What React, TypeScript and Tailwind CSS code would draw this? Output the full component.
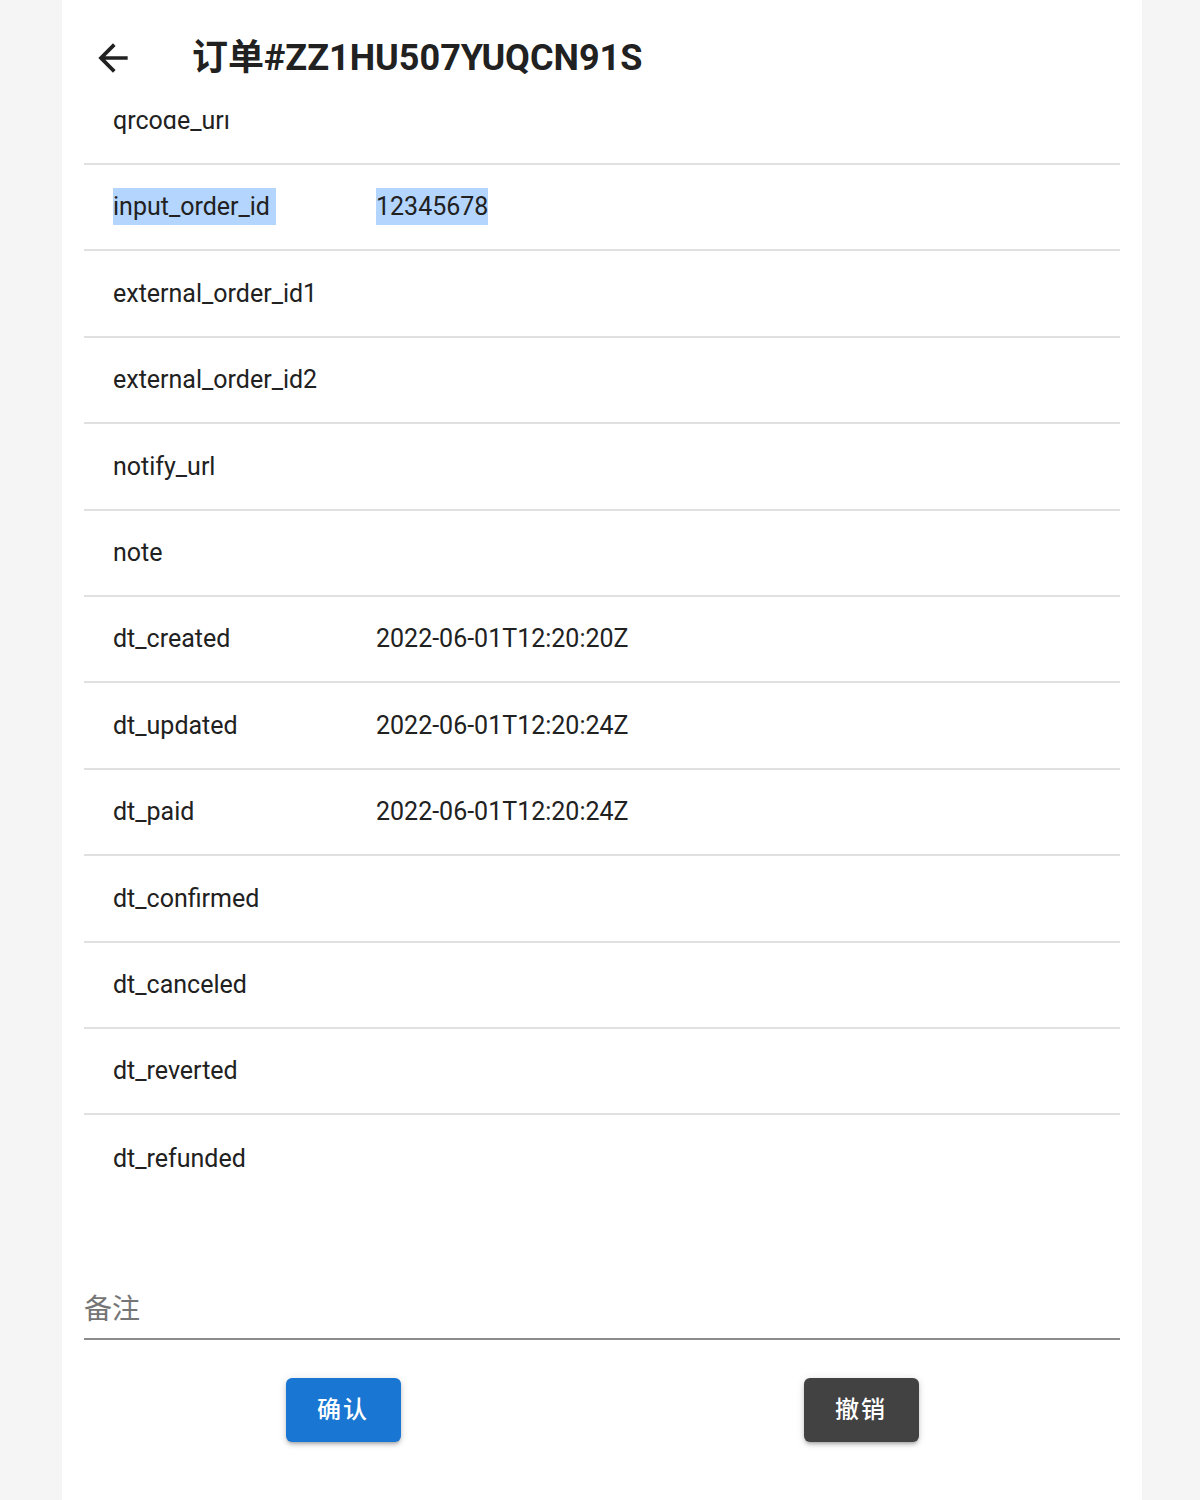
import React from "react";

const rows: [string, string, boolean?][] = [
  ["qrcode_url", ""],
  ["input_order_id", "12345678", true],
  ["external_order_id1", ""],
  ["external_order_id2", ""],
  ["notify_url", ""],
  ["note", ""],
  ["dt_created", "2022-06-01T12:20:20Z"],
  ["dt_updated", "2022-06-01T12:20:24Z"],
  ["dt_paid", "2022-06-01T12:20:24Z"],
  ["dt_confirmed", ""],
  ["dt_canceled", ""],
  ["dt_reverted", ""],
  ["dt_refunded", ""],
];

export default function App() {
  return (
    <div
      className="min-h-[1500px] w-[1200px] bg-[#f5f5f5] flex"
      style={{ fontFamily: "Roboto, 'Noto Sans CJK SC', sans-serif" }}
    >
      <div className="relative ml-[62px] w-[1080px] h-[1500px] bg-white overflow-hidden px-[22px]">
        <div className="absolute top-0 left-0 right-0 h-[115px] bg-white z-10 flex items-start pt-[36px]">
          <div className="w-[44px] h-[44px] ml-[29px] text-[#212121]">
            <svg viewBox="0 0 24 24" width="44" height="44" fill="currentColor">
              <path d="M20 11H7.83l5.59-5.59L12 4l-8 8 8 8 1.41-1.41L7.83 13H20v-2z" />
            </svg>
          </div>
          <div className="ml-[57px] mt-[4px] text-[36px] font-bold text-[#212121] leading-[36px]">
            订单#ZZ1HU507YUQCN91S
          </div>
        </div>
        <div className="pt-[78.6px]">
          {rows.map(([k, v, sel], i) => (
            <div
              key={k}
              className={
                "flex items-center h-[86.4px] text-[25px] text-[#212121] " +
                (i < rows.length - 1 ? "border-b-2 border-[#e0e0e0]" : "")
              }
            >
              <div className="w-[263px] pl-[29px]">
                <span className={sel ? "bg-[#b4d5fe] inline-block leading-[37px] pr-[6px]" : ""}>{k}</span>
              </div>
              <div className="pl-[29px]">
                <span className={sel ? "bg-[#b4d5fe] inline-block leading-[37px]" : ""}>{v}</span>
              </div>
            </div>
          ))}
        </div>
        <div className="mt-[91px] border-b-2 border-[#8c8c8c] pb-[11px]">
          <div className="text-[28px] text-[#757575] leading-[34px]">备注</div>
        </div>
        <div className="grid grid-cols-2 mt-[38px]">
          <div className="flex justify-center">
            <button className="w-[115px] h-[64px] rounded-[6px] bg-[#1976d2] text-white text-[24px] font-medium tracking-[2px] shadow-[0_3px_3px_-2px_rgba(0,0,0,0.2),0_3px_4px_0_rgba(0,0,0,0.14),0_1px_8px_0_rgba(0,0,0,0.12)]">
              确认
            </button>
          </div>
          <div className="flex justify-center">
            <button className="w-[115px] h-[64px] rounded-[6px] bg-[#424242] text-white text-[24px] font-medium tracking-[2px] shadow-[0_3px_3px_-2px_rgba(0,0,0,0.2),0_3px_4px_0_rgba(0,0,0,0.14),0_1px_8px_0_rgba(0,0,0,0.12)]">
              撤销
            </button>
          </div>
        </div>
      </div>
    </div>
  );
}
